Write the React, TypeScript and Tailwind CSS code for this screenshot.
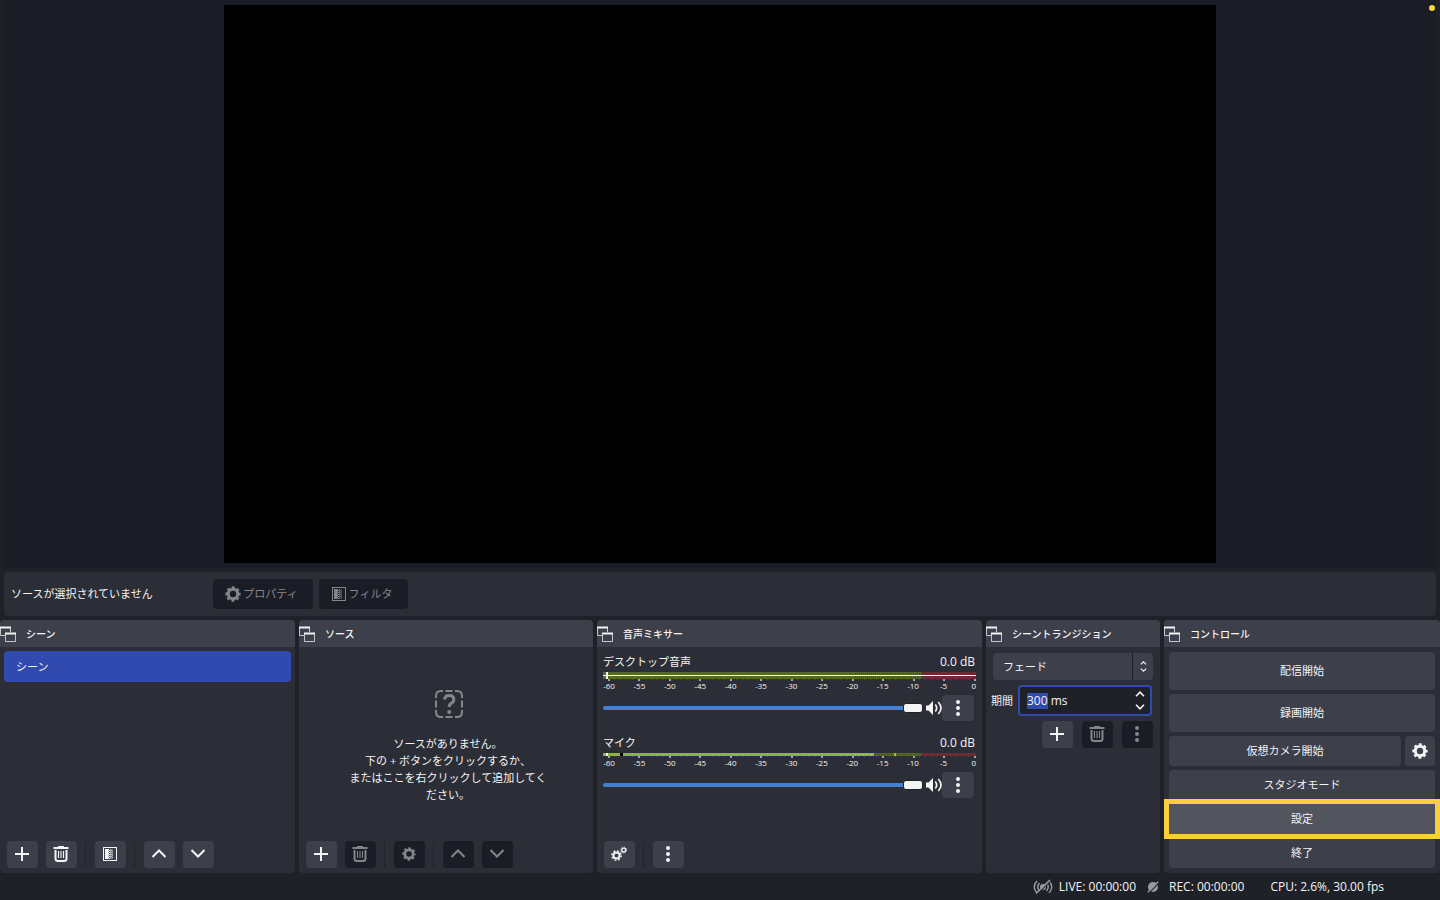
import { useEffect, useRef } from "react";
import type { ReactNode } from "react";

function GearIcon({ className = "" }: { className?: string }) {
  return (
    <svg viewBox="0 0 16 16" className={className} fill="none" stroke="currentColor" aria-hidden="true">
      <circle cx="8" cy="8" r="4.700" strokeWidth="3" />
      <circle cx="8" cy="8" r="6.700" strokeWidth="1.900" strokeDasharray="3 2.262" strokeDashoffset="1.500" />
    </svg>
  );
}

function GearsIcon() {
  return (
    <svg viewBox="0 0 16 16" className="size-4" fill="none" stroke="currentColor" aria-hidden="true">
      <circle cx="5.500" cy="9.500" r="3.100" strokeWidth="2" />
      <circle cx="5.500" cy="9.500" r="4.700" strokeWidth="1.400" strokeDasharray="1.850 1.840" />
      <circle cx="12.700" cy="4" r="1.900" strokeWidth="1.300" />
      <circle cx="12.700" cy="4" r="2.900" strokeWidth="1" strokeDasharray="1.150 1.130" />
    </svg>
  );
}

function PlusIcon() {
  return (
    <svg viewBox="0 0 16 16" className="size-4" fill="none" stroke="currentColor" strokeWidth="2" aria-hidden="true">
      <path d="M8 1v14M1 8h14" />
    </svg>
  );
}

function TrashIcon() {
  return (
    <svg viewBox="0 0 16 16" className="size-4" fill="none" stroke="currentColor" aria-hidden="true">
      <path d="M.5 2h15" strokeWidth="2" />
      <path d="M5 .6h6" strokeWidth="1.200" />
      <path d="M2.500 4v8.500q0 2.500 2.500 2.500h6q2.500 0 2.500-2.500V4" strokeWidth="2" />
      <path d="M5.500 5v7M8 5v7M10.500 5v7" strokeWidth="1.100" />
    </svg>
  );
}

function FilterIcon({ className = "" }: { className?: string }) {
  return (
    <svg viewBox="0 0 14 14" className={className} fill="currentColor" shapeRendering="crispEdges" aria-hidden="true">
      <path d="M.5.5h13v13H.5z" fill="none" stroke="currentColor" />
      <path d="M2 2h3v10H2z" />
      <path d="M5 2h1v1H5zM5 4h1v1H5zM5 6h1v1H5zM5 8h1v1H5zM5 10h1v1H5zM6 3h1v1H6zM6 5h1v1H6zM6 7h1v1H6zM6 9h1v1H6zM6 11h1v1H6z" />
      <path d="M5 3h1v9H5zM7 2h1v10H7z" opacity=".6" />
      <path d="M8 3h1v1H8zM8 5h1v1H8zM8 7h1v1H8zM8 9h1v1H8zM9 4h1v1H9zM9 6h1v1H9zM9 8h1v1H9zM9 10h1v1H9z" opacity=".6" />
      <path d="M8 2h2v10H8z" opacity=".25" />
    </svg>
  );
}

function ChevronIcon({ down = false, className = "size-4" }: { down?: boolean; className?: string }) {
  return (
    <svg viewBox="0 0 16 16" className={className} fill="none" stroke="currentColor" strokeWidth="2" aria-hidden="true">
      <path d={down ? "M1.500 4 8 10.500 14.500 4" : "M1.500 11 8 4.500l6.500 6.500"} />
    </svg>
  );
}

function SmallChevronIcon({ down = false, className = "" }: { down?: boolean; className?: string }) {
  return (
    <svg viewBox="0 0 10 6" className={className} fill="none" stroke="currentColor" strokeWidth="1.600" aria-hidden="true">
      <path d={down ? "M1 .8 5 4.800 9 .8" : "M1 5.200 5 1.200l4 4"} />
    </svg>
  );
}

function DotsIcon() {
  return (
    <svg viewBox="0 0 16 16" className="size-4" fill="currentColor" aria-hidden="true">
      <circle cx="8" cy="2" r="2" />
      <circle cx="8" cy="8" r="2" />
      <circle cx="8" cy="14" r="2" />
    </svg>
  );
}

function PopoutIcon() {
  return (
    <svg viewBox="0 0 16 16" className="size-4 shrink-0 text-[#f4f4f5]" fill="none" stroke="currentColor" aria-hidden="true">
      <path d="M.5 1v8.500H5M10.500 1v5" opacity=".75" />
      <path d="M0 1.500h11" strokeWidth="2" />
      <path d="M5.500 8v7.500h10V8" opacity=".75" />
      <path d="M5 7.500h11" strokeWidth="2" />
    </svg>
  );
}

function SpeakerIcon() {
  return (
    <svg viewBox="0 0 16 16" className="size-4 shrink-0" fill="none" stroke="currentColor" strokeWidth="1.700" aria-hidden="true">
      <path d="M0 5.500h2.500L7 1v14L2.500 10.500H0z" fill="currentColor" stroke="none" />
      <path d="M9.300 4.500q2.800 3.500 0 7M12.300 2q5.400 6 0 12" />
    </svg>
  );
}

function LiveOffIcon() {
  return (
    <svg viewBox="0 0 20 16" className="h-4 w-5 text-[#9a9ba1]" fill="none" stroke="currentColor" strokeWidth="1.400" aria-hidden="true">
      <path d="M4 2Q-1.500 8 4 14M6.500 4Q3 8 6.500 12M16 2q5.500 6 0 12M13.500 4q3.500 4 0 8" />
      <circle cx="10" cy="8" r="3" fill="currentColor" stroke="none" />
      <path d="M4.300 15.300 17.800 1.700" stroke="#1f2129" strokeWidth="1.200" />
      <path d="M3 14.500 17 1" strokeWidth="1.600" />
    </svg>
  );
}

function RecOffIcon() {
  return (
    <svg viewBox="0 0 12 12" className="size-3 text-[#9a9ba1]" fill="none" stroke="currentColor" aria-hidden="true">
      <circle cx="6" cy="6" r="5" fill="currentColor" stroke="none" />
      <path d="M1.600 12.200 12.400 1.400" stroke="#1f2129" strokeWidth="1.200" />
      <path d="M.8 11.200 11.200.8" strokeWidth="1.400" />
    </svg>
  );
}

function MissingSourceIcon() {
  return (
    <svg viewBox="0 0 28 28" className="size-7 text-[#85868c]" fill="none" stroke="currentColor" strokeWidth="2" aria-hidden="true">
      <path d="M1 8V6q0-5 5-5h2M20 1h2q5 0 5 5v2M27 20v2q0 5-5 5h-2M8 27H6q-5 0-5-5v-2M10.500 1h7M10.500 27h7M1 10.500v7M27 10.500v7" />
      <path d="M9.500 9.500q.5-4 4.700-4 4.600 0 4.600 4 0 2.500-2.300 3.700-2.200 1.100-2.300 3.800" strokeWidth="3" />
      <circle cx="14.200" cy="22" r="2" fill="currentColor" stroke="none" />
    </svg>
  );
}

function Dock({ title, children }: { title: string; children: ReactNode }) {
  return (
    <section className="flex min-w-0 flex-col rounded-sm bg-[#2c2e37]">
      <h2 className="flex h-[27px] shrink-0 items-center gap-2.5 rounded-t-sm bg-[#3d3f4a] text-[10px] font-medium">
        <PopoutIcon />
        <span className="pt-0.5">{title}</span>
      </h2>
      {children}
    </section>
  );
}

function ToolButton({ label, disabled = false, children }: { label: string; disabled?: boolean; children: ReactNode }) {
  return (
    <button
      type="button"
      aria-label={label}
      disabled={disabled}
      className="flex h-[27px] w-[31px] items-center justify-center rounded-sm bg-[#3d3f4a] pr-px pb-px disabled:bg-[#1a1d25] disabled:text-[#85868c]"
    >
      {children}
    </button>
  );
}

function Separator() {
  return <span className="h-[25px] w-0.5 border-l border-dotted border-[#17191f]" />;
}

function Toolbar({ children }: { children: ReactNode }) {
  return <div className="mt-auto flex items-center gap-2 px-[7px] pb-[5px]">{children}</div>;
}

const dbMarks = [-60, -55, -50, -45, -40, -35, -30, -25, -20, -15, -10, -5, 0];

function Meter({ stereo, id }: { stereo: boolean; id: string }) {
  const bar = stereo ? 7 : 3;
  const height = bar + 3;
  return (
    <svg
      viewBox={`0 0 373 ${height}`}
      preserveAspectRatio="none"
      shapeRendering="crispEdges"
      className={stereo ? "h-2.5 w-full" : "h-1.5 w-full"}
      aria-hidden="true"
    >
      <defs>
        <pattern id={`${id}-warn`} width="2" height="2" patternUnits="userSpaceOnUse">
          <rect width="2" height="2" fill="#55682a" />
          <rect x="0" y="1" width="1" height="1" fill="#6c2a35" />
        </pattern>
        <pattern id={`${id}-hot`} width="4" height="2" patternUnits="userSpaceOnUse">
          <rect width="4" height="2" fill="#8bb441" />
          <rect x="0" y="1" width="1" height="1" fill="#f0c63c" />
        </pattern>
      </defs>
      <rect width="251" height={bar} fill={stereo ? "#55682a" : "#8bb441"} />
      <rect x="251" width="67" height={bar} fill={`url(#${id}-warn)`} />
      <rect x="318" width="55" height={bar} fill="#6c2a35" />
      {stereo ? (
        <rect y="3" width="373" height="1" fill="#f4f4f5" />
      ) : (
        <>
          <rect x="251" width="20" height="3" fill={`url(#${id}-hot)`} />
          <rect x="291" width="2" height="3" fill="#a5bd3e" />
          <rect x="17" width="3" height="3" fill="#000" />
        </>
      )}
      <rect x="3" width="2" height={bar} fill="#f4f4f5" />
      {Array.from({ length: 61 }, (_, i) => (
        <rect
          key={i}
          x={Math.round((i % 5 === 0 ? 4.500 : 5) + i * 6.1)}
          y={bar}
          width={i % 5 === 0 ? 2 : 1}
          height={i % 5 === 0 ? 2 : 1}
          fill={i % 5 === 0 ? "#a3a4a8" : "#4a4c56"}
        />
      ))}
    </svg>
  );
}

function Channel({ name, id, stereo = false }: { name: string; id: string; stereo?: boolean }) {
  return (
    <div className="flex flex-col">
      <div className="mb-px flex h-[18px] items-center justify-between">
        <label htmlFor={id} className="text-[11px]">{name}</label>
        <span className="pr-px text-xs">0.0 dB</span>
      </div>
      <Meter stereo={stereo} id={`${id}-meter`} />
      <div className="flex h-[9px] items-center justify-between pr-[2px] pl-[6px] text-[8px] leading-[7px] font-medium">
        {dbMarks.map((db) => (
          <span key={db} className="flex h-[9px] w-0 justify-center whitespace-nowrap">{db}</span>
        ))}
      </div>
      <div className="mt-1 flex h-[26px] items-center pr-0.5">
        <input
          id={id}
          type="range"
          defaultValue={100}
          className="h-2.5 min-w-0 flex-1 appearance-none bg-transparent [&::-webkit-slider-runnable-track]:h-1 [&::-webkit-slider-runnable-track]:rounded-full [&::-webkit-slider-runnable-track]:bg-[#477fd0] [&::-webkit-slider-thumb]:-mt-[3px] [&::-webkit-slider-thumb]:h-2.5 [&::-webkit-slider-thumb]:w-5 [&::-webkit-slider-thumb]:appearance-none [&::-webkit-slider-thumb]:rounded-[3px] [&::-webkit-slider-thumb]:border [&::-webkit-slider-thumb]:border-[#1f2129] [&::-webkit-slider-thumb]:bg-[#f4f4f5]"
        />
        <button type="button" aria-label={`${name} ミュート`} className="ml-[3px]">
          <SpeakerIcon />
        </button>
        <button type="button" aria-label={`${name} メニュー`} className="flex h-[26px] w-8 items-center justify-center rounded-sm bg-[#3d3f4a]">
          <DotsIcon />
        </button>
      </div>
    </div>
  );
}

function TransitionPanel() {
  const duration = useRef<HTMLInputElement>(null);
  useEffect(() => {
    duration.current?.focus();
    duration.current?.setSelectionRange(0, 3);
  }, []);
  return (
    <div className="flex flex-col gap-[5px] pt-1.5 pr-[7px] pl-[5px]">
      <div className="relative ml-0.5 flex">
        <select
          aria-label="シーントランジション"
          className="h-[27px] w-full appearance-none rounded-sm bg-[#3d3f4a] pt-0.5 pr-6 pl-2.5 text-[11px]"
        >
          <option>フェード</option>
        </select>
        <span className="pointer-events-none absolute inset-y-0 right-0 flex w-[21px] flex-col items-center justify-center gap-[3px] border-l border-[#1f2129]">
          <SmallChevronIcon className="h-1 w-[7px]" />
          <SmallChevronIcon down className="h-1 w-[7px]" />
        </span>
      </div>
      <div className="flex items-center gap-[5px] pr-px">
        <label htmlFor="duration" className="shrink-0 pt-0.5 text-[11px]">期間</label>
        <div className="flex h-[31px] min-w-0 flex-1 items-center rounded-sm border-2 border-[#314ab0] bg-[#1f2129] pr-[5px] pl-[7px]">
          <input
            id="duration"
            ref={duration}
            defaultValue="300 ms"
            className="min-w-0 flex-1 bg-transparent text-xs outline-none selection:bg-[#314ab0] selection:text-[#f4f4f5]"
          />
          <div className="flex flex-col gap-[7px]">
            <button type="button" aria-label="増やす"><SmallChevronIcon className="h-1.5 w-2.5" /></button>
            <button type="button" aria-label="減らす"><SmallChevronIcon down className="h-1.5 w-2.5" /></button>
          </div>
        </div>
      </div>
      <div className="flex justify-end gap-[9px]">
        <ToolButton label="トランジションを追加"><PlusIcon /></ToolButton>
        <ToolButton label="トランジションを削除" disabled><TrashIcon /></ToolButton>
        <ToolButton label="トランジションのメニュー" disabled><DotsIcon /></ToolButton>
      </div>
    </div>
  );
}

function ControlsPanel() {
  const base = "w-full rounded-sm bg-[#3d3f4a] pt-px text-[11px]";
  return (
    <div className="flex flex-col gap-1 p-[5px]">
      <button type="button" className={`${base} h-[38px]`}>配信開始</button>
      <button type="button" className={`${base} h-[38px]`}>録画開始</button>
      <div className="flex gap-1">
        <button type="button" className={`${base} h-[30px]`}>仮想カメラ開始</button>
        <button type="button" aria-label="仮想カメラの設定" className="flex size-[30px] shrink-0 items-center justify-center rounded-sm bg-[#3d3f4a]">
          <GearIcon className="size-4" />
        </button>
      </div>
      <button type="button" className={`${base} h-[30px]`}>スタジオモード</button>
      <button type="button" className="relative z-10 h-[30px] w-full bg-[#52555e] pt-px text-[11px] outline-5 outline-[#fbcf3b]">設定</button>
      <button type="button" className={`${base} h-[30px]`}>終了</button>
    </div>
  );
}

export default function App() {
  return (
    <main className="flex h-screen flex-col bg-[#1f2129] font-['Open_Sans','Noto_Sans_CJK_JP',sans-serif] text-[#f4f4f5]">
      <section className="relative mx-1 flex min-h-0 flex-1 justify-center bg-[#1a1d25] py-[5px]">
        <div className="aspect-video bg-black" />
        <span className="absolute top-[5px] right-px size-1.5 rounded-full bg-[#fbd63b]" />
      </section>

      <section className="mx-1 mt-1 flex h-11 shrink-0 items-center rounded-sm bg-[#2c2e37] pl-[7px] text-[11px]">
        <p className="w-[202px] pt-px">ソースが選択されていません</p>
        <div className="flex gap-1.5 text-[#85868c]">
          <button type="button" disabled className="flex h-[30px] w-[100px] items-center justify-center gap-0.5 rounded-sm bg-[#1a1d25] pr-[3px]">
            <GearIcon className="size-4" />
            プロパティ
          </button>
          <button type="button" disabled className="flex h-[30px] w-[89px] items-center justify-center gap-[3px] rounded-sm bg-[#1a1d25] pr-[3px]">
            <FilterIcon className="size-3.5" />
            フィルタ
          </button>
        </div>
      </section>

      <div className="mt-1 grid shrink-0 grid-cols-[295fr_294fr_385fr_174fr_276fr] gap-1">
        <Dock title="シーン">
          <ul className="p-1">
            <li>
              <button type="button" className="h-[31px] w-full rounded-sm bg-[#314ab0] px-3 pt-px text-left text-[11px]">シーン</button>
            </li>
          </ul>
          <Toolbar>
            <ToolButton label="シーンを追加"><PlusIcon /></ToolButton>
            <ToolButton label="シーンを削除"><TrashIcon /></ToolButton>
            <Separator />
            <ToolButton label="シーンフィルタ"><FilterIcon className="size-3.5" /></ToolButton>
            <Separator />
            <ToolButton label="シーンを上に移動"><ChevronIcon /></ToolButton>
            <ToolButton label="シーンを下に移動"><ChevronIcon down /></ToolButton>
          </Toolbar>
        </Dock>

        <Dock title="ソース">
          <div className="flex flex-1 flex-col items-center gap-[17px] pt-[43px] pl-1.5">
            <MissingSourceIcon />
            <p className="-ml-0.5 text-center text-[11px] leading-[17px]">
              ソースがありません。<br />
              下の + ボタンをクリックするか、<br />
              またはここを右クリックして追加してく<br />
              ださい。
            </p>
          </div>
          <Toolbar>
            <ToolButton label="ソースを追加"><PlusIcon /></ToolButton>
            <ToolButton label="ソースを削除" disabled><TrashIcon /></ToolButton>
            <Separator />
            <ToolButton label="ソースのプロパティ" disabled><GearIcon className="size-3.5" /></ToolButton>
            <Separator />
            <ToolButton label="ソースを上に移動" disabled><ChevronIcon /></ToolButton>
            <ToolButton label="ソースを下に移動" disabled><ChevronIcon down /></ToolButton>
          </Toolbar>
        </Dock>

        <Dock title="音声ミキサー">
          <div className="flex flex-col gap-[13px] px-1.5 pt-1.5">
            <Channel name="デスクトップ音声" id="desktop-audio" stereo />
            <Channel name="マイク" id="mic" />
          </div>
          <Toolbar>
            <ToolButton label="オーディオの詳細プロパティ"><GearsIcon /></ToolButton>
            <Separator />
            <ToolButton label="音声ミキサーのメニュー"><DotsIcon /></ToolButton>
          </Toolbar>
        </Dock>

        <Dock title="シーントランジション">
          <TransitionPanel />
        </Dock>

        <Dock title="コントロール">
          <ControlsPanel />
        </Dock>
      </div>

      <footer className="flex h-[27px] shrink-0 items-center justify-end pr-14 text-xs">
        <LiveOffIcon />
        <span className="ml-1.5">LIVE: 00:00:00</span>
        <span className="mr-2.5 ml-[11px]"><RecOffIcon /></span>
        <span>REC: 00:00:00</span>
        <span className="ml-[26px]">CPU: 2.6%, 30.00 fps</span>
      </footer>
    </main>
  );
}
